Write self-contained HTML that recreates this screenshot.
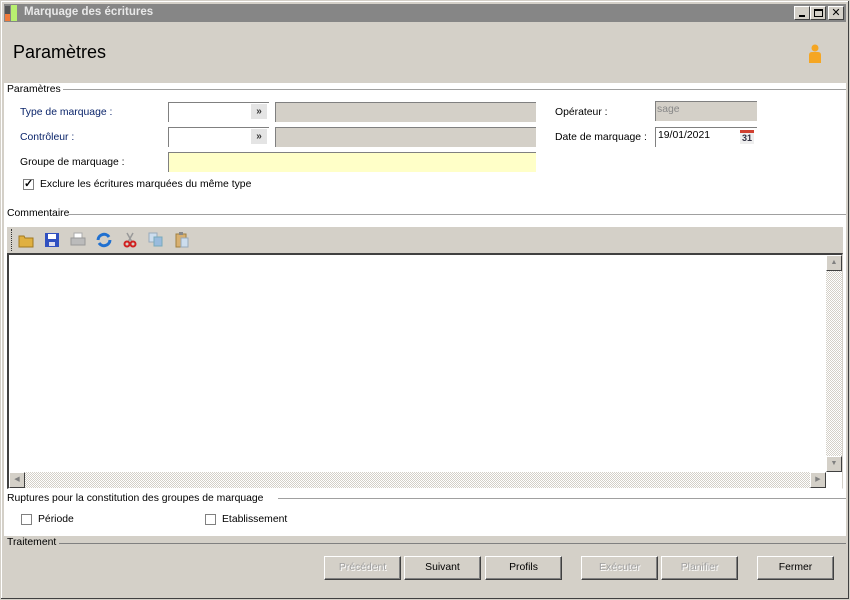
<!DOCTYPE html>
<html><head><meta charset="utf-8"><style>
*{margin:0;padding:0;box-sizing:border-box}
body{width:850px;height:600px;position:relative;overflow:hidden;background:#d4d0c8;font-family:"Liberation Sans",sans-serif;font-size:10.4px;color:#000}
.a{position:absolute}
.lbl{position:absolute;font-size:10.4px;white-space:nowrap}
.blue{color:#0a246a}
.inp{position:absolute;background:#fff;border-top:1px solid #808080;border-left:1px solid #808080;height:20px}
.gray{background:#d4d0c8}
.sec{position:absolute;height:1px;background:#a0a0a0}
.btn{position:absolute;top:556px;height:24px;width:77px;background:#d4d0c8;border-top:1px solid #fff;border-left:1px solid #fff;border-right:1px solid #404040;border-bottom:1px solid #404040;box-shadow:inset -1px -1px 0 #808080;text-align:center;line-height:22px;font-size:10.4px}
.dis{color:#a0a0a0;text-shadow:1px 1px 0 #fff}
.cb{position:absolute;width:11px;height:11px;border:1px solid #808080;background:#fff}
.tb{position:absolute;top:0;width:16px;height:16px}
</style></head><body>
<div class="a" style="left:0;top:0;width:850px;height:600px;border:1px solid #d4d0c8;box-shadow:inset -1px -1px 0 #404040,inset 1px 1px 0 #fff"></div>
<div class="a" style="left:4px;top:4px;width:842px;height:18px;background:#868686"></div>
<div class="a" style="left:5px;top:6px;width:5px;height:8px;background:#555"></div>
<div class="a" style="left:5px;top:14px;width:5px;height:7px;background:#f07a3a"></div>
<div class="a" style="left:11px;top:5px;width:6px;height:16px;background:#b8f070"></div>
<div class="lbl" style="left:24px;top:6px;color:#e8e8e8;font-size:11.5px;font-weight:bold">Marquage des écritures</div>
<div class="a" style="left:794px;top:6px;width:16px;height:14px;background:#d4d0c8;border:1px solid;border-color:#fff #404040 #404040 #fff"><div class="a" style="left:4px;top:8px;width:6px;height:2px;background:#000"></div></div>
<div class="a" style="left:810px;top:6px;width:16px;height:14px;background:#d4d0c8;border:1px solid;border-color:#fff #404040 #404040 #fff"><div class="a" style="left:3px;top:2px;width:9px;height:8px;border:1px solid #000;border-top-width:2px"></div></div>
<div class="a" style="left:828px;top:6px;width:16px;height:14px;background:#d4d0c8;border:1px solid;border-color:#fff #404040 #404040 #fff;font-size:11px;text-align:center;line-height:12px">✕</div>
<div class="lbl" style="left:13px;top:42px;font-size:18px">Paramètres</div>
<svg class="a" style="left:806px;top:43px" width="18" height="22"><circle cx="9" cy="5" r="3.5" fill="#f5a623"/><path d="M3 20 L3 12 Q3 9 6 9 L12 9 Q15 9 15 12 L15 20 Z" fill="#f5a623"/></svg>
<div class="a" style="left:4px;top:83px;width:842px;height:453px;background:#fff"></div>
<div class="lbl" style="left:7px;top:84px">Paramètres</div>
<div class="sec" style="left:63px;top:89px;width:783px"></div>
<div class="lbl blue" style="left:20px;top:107px">Type de marquage :</div>
<div class="lbl blue" style="left:20px;top:132px">Contrôleur :</div>
<div class="lbl" style="left:20px;top:157px">Groupe de marquage :</div>
<div class="inp" style="left:168px;top:102px;width:101px"></div>
<div class="inp" style="left:168px;top:127px;width:101px"></div>
<div class="a" style="left:251px;top:104px;width:16px;height:15px;background:#e4e4e4;font-size:10px;font-weight:bold;text-align:center;line-height:15px;color:#333">»</div>
<div class="a" style="left:251px;top:129px;width:16px;height:15px;background:#e4e4e4;font-size:10px;font-weight:bold;text-align:center;line-height:15px;color:#333">»</div>
<div class="inp gray" style="left:275px;top:102px;width:261px"></div>
<div class="inp gray" style="left:275px;top:127px;width:261px"></div>
<div class="inp" style="left:168px;top:152px;width:368px;background:#ffffc8"></div>
<div class="cb" style="left:23px;top:179px;font-size:11px;line-height:9px;text-align:center;font-weight:bold">✓</div>
<div class="lbl" style="left:40px;top:179px">Exclure les écritures marquées du même type</div>
<div class="lbl" style="left:555px;top:107px">Opérateur :</div>
<div class="lbl" style="left:555px;top:132px">Date de marquage :</div>
<div class="inp gray" style="left:655px;top:101px;width:102px;color:#888;padding:2px 1px">sage</div>
<div class="inp" style="left:655px;top:127px;width:102px;padding:2px 2px">19/01/2021</div>
<div class="a" style="left:740px;top:130px;width:14px;height:14px;background:#eee;border-top:3px solid #d04030;font-size:9px;font-weight:bold;color:#334;text-align:center;line-height:11px">31</div>
<div class="lbl" style="left:7px;top:208px">Commentaire</div>
<div class="sec" style="left:69px;top:214px;width:777px"></div>
<div class="a" style="left:7px;top:227px;width:836px;height:26px;background:#d4d0c8"></div>
<div class="a" style="left:11px;top:229px;width:1px;height:22px;border-left:1px dotted #333"></div>
<div class="a" style="left:18px;top:232px;width:800px;height:16px">
<svg class="tb" style="left:0"><path d="M1 4h5l1 2h8v9H1z" fill="#e0b040" stroke="#a07820"/></svg>
<svg class="tb" style="left:26px"><rect x="1" y="1" width="14" height="14" fill="#3050c0"/><rect x="4" y="2" width="8" height="5" fill="#fff"/><rect x="5" y="10" width="6" height="4" fill="#dde"/></svg>
<svg class="tb" style="left:52px"><rect x="4" y="1" width="8" height="5" fill="#fff" stroke="#aaa"/><rect x="1" y="6" width="14" height="7" fill="#bbb" stroke="#999"/></svg>
<svg class="tb" style="left:78px"><path d="M2 8a6 6 0 0 1 11-3" stroke="#2070d0" stroke-width="3" fill="none"/><path d="M14 8a6 6 0 0 1-11 3" stroke="#2070d0" stroke-width="3" fill="none"/></svg>
<svg class="tb" style="left:104px"><path d="M5 1l5 9M11 1l-5 9" stroke="#999" stroke-width="1.5"/><circle cx="5" cy="12" r="2.5" fill="none" stroke="#d02020" stroke-width="2"/><circle cx="11" cy="12" r="2.5" fill="none" stroke="#d02020" stroke-width="2"/></svg>
<svg class="tb" style="left:130px"><rect x="1" y="1" width="8" height="9" fill="#cde" stroke="#9ab"/><rect x="6" y="5" width="8" height="9" fill="#9bd" stroke="#7ab"/></svg>
<svg class="tb" style="left:156px"><rect x="2" y="2" width="10" height="13" fill="#d8b070" stroke="#a08040"/><rect x="5" y="0" width="4" height="3" fill="#888"/><rect x="7" y="6" width="7" height="9" fill="#cde" stroke="#9ab"/></svg>
</div>
<div class="a" style="left:7px;top:253px;width:836px;height:236px;border-top:2px solid #404040;border-left:2px solid #404040;border-right:1px solid #d4d0c8;border-bottom:1px solid #fff;background:#fff"></div>
<div class="a" style="left:826px;top:255px;width:16px;height:217px;background:repeating-conic-gradient(#d4d0c8 0 25%,#fff 0 50%) 0 0/2px 2px"></div>
<div class="a" style="left:9px;top:472px;width:817px;height:16px;background:repeating-conic-gradient(#d4d0c8 0 25%,#fff 0 50%) 0 0/2px 2px"></div>
<div class="a" style="left:826px;top:255px;width:16px;height:16px;background:#d4d0c8;border:1px solid;border-color:#fff #404040 #404040 #fff;font-size:7px;color:#808080;text-align:center;line-height:13px">▲</div>
<div class="a" style="left:826px;top:456px;width:16px;height:16px;background:#d4d0c8;border:1px solid;border-color:#fff #404040 #404040 #fff;font-size:7px;color:#808080;text-align:center;line-height:13px">▼</div>
<div class="a" style="left:9px;top:472px;width:16px;height:16px;background:#d4d0c8;border:1px solid;border-color:#fff #404040 #404040 #fff;font-size:7px;color:#808080;text-align:center;line-height:13px">◀</div>
<div class="a" style="left:810px;top:472px;width:16px;height:16px;background:#d4d0c8;border:1px solid;border-color:#fff #404040 #404040 #fff;font-size:7px;color:#808080;text-align:center;line-height:13px">▶</div>
<div class="lbl" style="left:7px;top:493px">Ruptures pour la constitution des groupes de marquage</div>
<div class="sec" style="left:278px;top:498px;width:568px"></div>
<div class="cb" style="left:21px;top:514px"></div>
<div class="lbl" style="left:38px;top:514px">Période</div>
<div class="cb" style="left:205px;top:514px"></div>
<div class="lbl" style="left:222px;top:514px">Etablissement</div>
<div class="lbl" style="left:7px;top:537px">Traitement</div>
<div class="sec" style="left:59px;top:543px;width:787px;background:#808080"></div>
<div class="btn dis" style="left:324px">Précédent</div>
<div class="btn" style="left:404px">Suivant</div>
<div class="btn" style="left:485px">Profils</div>
<div class="btn dis" style="left:581px">Exécuter</div>
<div class="btn dis" style="left:661px">Planifier</div>
<div class="btn" style="left:757px">Fermer</div>
</body></html>
